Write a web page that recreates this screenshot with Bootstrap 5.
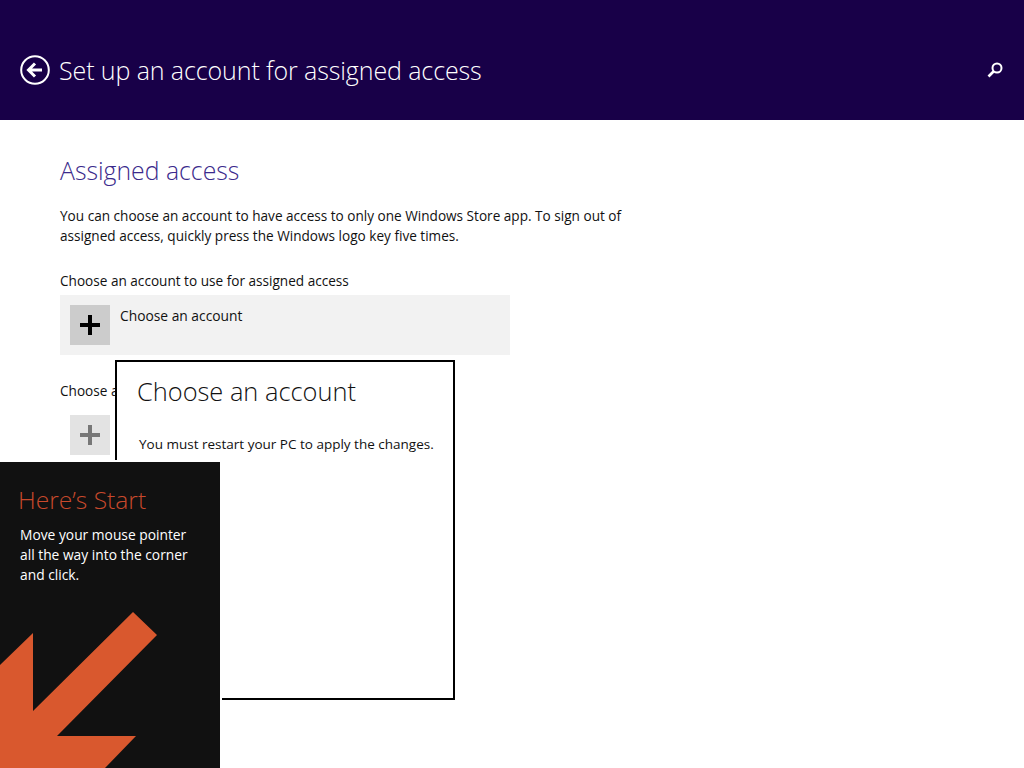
<!DOCTYPE html>
<html>
  <head>
    <meta charset="utf-8" />
    <link
      rel="stylesheet"
      href="https://cdn.jsdelivr.net/npm/bootstrap@5.3.2/dist/css/bootstrap.min.css"
    />
    <title>Set up an account for assigned access</title>
    <style>
      body {
        font-family: "Open Sans", "Noto Sans", sans-serif;
        font-size: 13.6px;
        color: #111;
        overflow: hidden;
        height: 768px;
      }
      .top-bar {
        height: 120px;
        background: #180048;
        color: #fff;
        padding: 20px 21px 0 20px;
      }
      .top-bar h1 {
        font-size: 25px;
        font-weight: 300;
        letter-spacing: -0.1px;
        margin: 0 0 0 9px;
      }
      .page-body {
        padding: 32px 0 0 60px;
      }
      .section-title {
        color: #3b2a8c;
        font-size: 24.8px;
        font-weight: 300;
        line-height: 36px;
        margin: 0 0 18px;
      }
      .intro-text {
        width: 580px;
        line-height: 20px;
        margin: 0 0 25px;
      }
      .field-label {
        line-height: 20px;
        margin: 0 0 4px;
      }
      .picker-row {
        width: 450px;
        height: 60px;
        padding: 10px;
        margin-bottom: 26px;
      }
      .picker-active {
        background: #f2f2f2;
      }
      .plus-box {
        width: 40px;
        height: 40px;
        background: #ccc;
      }
      .plus-off {
        background: #e3e3e3;
      }
      .picker-name {
        font-size: 13.8px;
        line-height: 20px;
        margin: 1px 0 0 2px;
      }
      .account-dialog {
        position: absolute;
        left: 115px;
        top: 360px;
        width: 340px;
        height: 340px;
        background: #fff;
        border: 2px solid #000;
        padding: 11px 20px;
      }
      .account-dialog h2 {
        font-size: 25.4px;
        font-weight: 300;
        line-height: 36px;
        margin: 0 0 25px;
      }
      .account-dialog p {
        font-size: 13.5px;
        margin: 0 0 0 2px;
        line-height: 20px;
        white-space: nowrap;
      }
      .start-tip {
        position: absolute;
        left: 0;
        top: 460px;
        width: 222px;
        height: 308px;
        background: #111;
        border-top: 2px solid #fff;
        border-right: 2px solid #fff;
        color: #fff;
        padding: 20px 0 0 20px;
      }
      .start-tip h3 {
        color: #c8492c;
        font-size: 24.6px;
        font-weight: 300;
        line-height: 36px;
        margin: 0 0 7px -2px;
      }
      .start-tip p {
        font-size: 13.8px;
        line-height: 20px;
        margin: 0;
      }
      .start-arrow {
        position: absolute;
        left: 0;
        top: 0;
      }
    </style>
  </head>
  <body class="position-relative">
    <header class="top-bar d-flex align-items-center justify-content-between">
      <div class="d-flex align-items-center">
        <svg width="30" height="30" viewBox="0 0 30 30" fill="none" stroke="#fff">
          <circle cx="15" cy="15" r="13.8" stroke-width="2" />
          <path d="M15 8.5 8.5 15l6.5 6.5M9 15h13" stroke-width="3" />
        </svg>
        <h1>Set up an account for assigned access</h1>
      </div>
      <svg width="16" height="16" viewBox="0 0 16 16" fill="none" stroke="#fff">
        <circle cx="10" cy="6" r="4.5" stroke-width="2" />
        <path d="M6.5 9.5 1.5 14.5" stroke-width="2.6" />
      </svg>
    </header>

    <main class="page-body">
      <h2 class="section-title">Assigned access</h2>
      <p class="intro-text">
        You can choose an account to have access to only one Windows Store app.
        To sign out of assigned access, quickly press the Windows logo key five
        times.
      </p>

      <p class="field-label">Choose an account to use for assigned access</p>
      <div class="picker-row picker-active d-flex gap-2">
        <div class="plus-box flex-shrink-0 d-flex align-items-center justify-content-center">
          <svg width="20" height="20" viewBox="0 0 20 20"><path d="M0 8h20v4H0zM8 0h4v20H8z" fill="#000" /></svg>
        </div>
        <div class="picker-name">Choose an account</div>
      </div>

      <p class="field-label">Choose a</p>
      <div class="picker-row d-flex gap-2">
        <div class="plus-box plus-off flex-shrink-0 d-flex align-items-center justify-content-center">
          <svg width="20" height="20" viewBox="0 0 20 20"><path d="M0 8h20v4H0zM8 0h4v20H8z" fill="#777" /></svg>
        </div>
      </div>
    </main>

    <section class="account-dialog">
      <h2>Choose an account</h2>
      <p>You must restart your PC to apply the changes.</p>
    </section>

    <aside class="start-tip">
      <svg class="start-arrow" width="220" height="306" viewBox="0 0 220 306">
        <path d="M133 150 157 173 57 274H136L105 306H0V203L33 171V249Z" fill="#d9582e" />
      </svg>
      <h3 class="position-relative">Here’s Start</h3>
      <p class="position-relative">Move your mouse pointer<br />all the way into the corner<br />and click.</p>
    </aside>

    <script src="https://cdn.jsdelivr.net/npm/bootstrap@5.3.2/dist/js/bootstrap.bundle.min.js"></script>
  </body>
</html>
